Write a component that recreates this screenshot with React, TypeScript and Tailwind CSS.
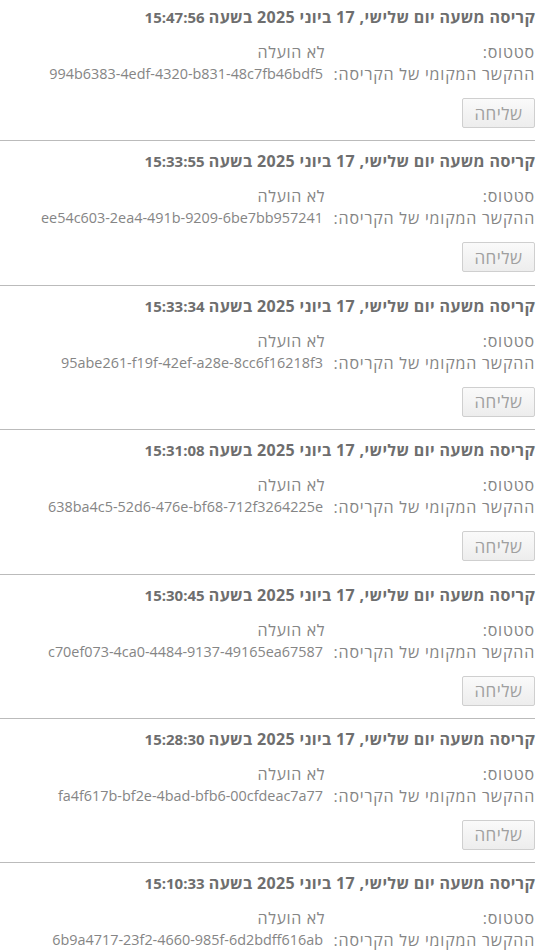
const crashes = [
  { time: "15:47:56", id: "994b6383-4edf-4320-b831-48c7fb46bdf5" },
  { time: "15:33:55", id: "ee54c603-2ea4-491b-9209-6be7bb957241" },
  { time: "15:33:34", id: "95abe261-f19f-42ef-a28e-8cc6f16218f3" },
  { time: "15:31:08", id: "638ba4c5-52d6-476e-bf68-712f3264225e" },
  { time: "15:30:45", id: "c70ef073-4ca0-4484-9137-49165ea67587" },
  { time: "15:28:30", id: "fa4f617b-bf2e-4bad-bfb6-00cfdeac7a77" },
  { time: "15:10:33", id: "6b9a4717-23f2-4660-985f-6d2bdff616ab" },
];

export default function App() {
  return (
    <div
      dir="rtl"
      className="min-h-screen bg-white pr-[7px] text-[#858585]"
      style={{ fontFamily: '"Open Sans", sans-serif' }}
    >
      {crashes.map((crash) => (
        <div
          key={crash.id}
          className="border-b border-[#bbbbbb] pt-[10px] pb-[12.4px] first:pt-[7px]"
        >
          <h3 className="h-[20px] whitespace-nowrap text-[#6e6e6e] font-bold leading-[20px]">
            <span className="text-[16px] tracking-[0.35px]">
              קריסה משעה יום שלישי, 17 ביוני 2025 בשעה
            </span>{" "}
            <span className="text-[15px]">{crash.time}</span>
          </h3>
          <table className="mt-[14px] leading-[22px]">
            <tbody>
              <tr>
                <td className="w-[210px] pl-2 align-top text-[16px] tracking-[0.8px]">
                  סטטוס:
                </td>
                <td className="text-[16px] tracking-[0.6px]">לא הועלה</td>
              </tr>
              <tr>
                <td className="whitespace-nowrap pl-2 align-top text-[16px] tracking-[0.8px]">
                  ההקשר המקומי של הקריסה:
                </td>
                <td dir="ltr" className="pr-[2px] text-right text-[14.4px]">
                  {crash.id}
                </td>
              </tr>
            </tbody>
          </table>
          <button className="mt-[13px] h-[30px] w-[73px] rounded-[2px] border border-[#cfcfcf] bg-gradient-to-b from-[#fafafa] to-[#ededed] text-[17px] leading-none tracking-[0.5px] text-[#a0a0a0]">
            שליחה
          </button>
        </div>
      ))}
    </div>
  );
}
